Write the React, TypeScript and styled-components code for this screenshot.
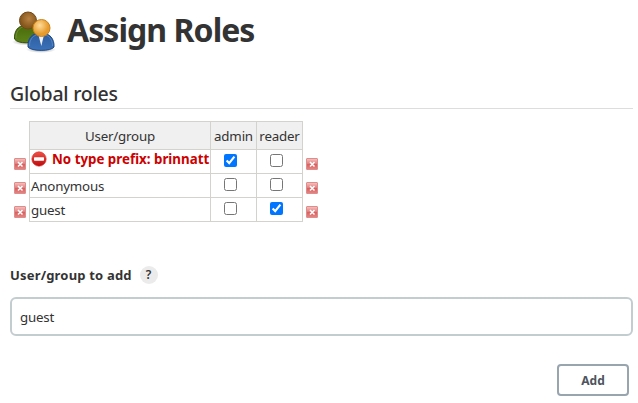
import React from "react";
import styled, { createGlobalStyle } from "styled-components";

const Global = createGlobalStyle`
  *, *::before, *::after { box-sizing: border-box; }
  body { margin: 0; background: #fff; overflow: hidden; }
`;

const Page = styled.main`
  width: 638px;
  height: 403px;
  padding: 0 5px 0 10px;
  display: flex;
  flex-direction: column;
  color: #333;
  background: #fff;
  font: 14px/20px "Noto Sans", "Open Sans", sans-serif;
  white-space: nowrap;
`;

const TitleBar = styled.header`
  display: flex;
  align-items: center;
  gap: 9px;
  height: 60px;
  svg { flex: none; }
`;

const Title = styled.h1`
  margin: 0;
  font-size: 32px;
  line-height: 40px;
  font-weight: 700;
  letter-spacing: -0.95px;
`;

const SectionTitle = styled.h2`
  margin: 20px 0 0;
  height: 29px;
  border-bottom: 1px solid #ddd;
  font-size: 19.5px;
  line-height: 28px;
  font-weight: 500;
  letter-spacing: -0.25px;
`;

const Matrix = styled.div`
  margin-top: 12px;
  display: flex;
  flex-direction: column;
`;

const Row = styled.div<{ $head?: boolean }>`
  display: grid;
  grid-template-columns: 19px 182px 46px 46px 20px;
  height: ${(p) => (p.$head ? 29 : 24)}px;
`;

const Cell = styled.div<{ $head?: boolean; $first?: boolean; $center?: boolean }>`
  display: flex;
  align-items: center;
  justify-content: ${(p) => (p.$center ? "center" : "flex-start")};
  padding: ${(p) => (p.$center ? "0" : "0 0 0 1px")};
  border: 0 solid #d3d3cb;
  border-right-width: 1px;
  border-bottom-width: 1px;
  border-left-width: ${(p) => (p.$first ? 1 : 0)}px;
  border-top-width: ${(p) => (p.$head ? 1 : 0)}px;
  background: ${(p) => (p.$head ? "#f0f0f0" : "#fff")};
  font-size: 13.33px;
  letter-spacing: -0.2px;
`;

const ErrorName = styled.span`
  display: flex;
  align-items: center;
  gap: 5px;
  margin-top: -5px;
  color: #c00;
  font-weight: 700;
  letter-spacing: 0;
`;

const Check = styled.input`
  width: 13px;
  height: 13px;
  margin: 0 6px 3px 0;
`;

const RemoveSlot = styled.div<{ $end?: boolean }>`
  padding: 8px 0 0 ${(p) => (p.$end ? 3 : 4)}px;
  line-height: 0;
`;

const Label = styled.div`
  display: flex;
  align-items: center;
  gap: 8px;
  height: 20px;
  margin-top: 43px;
  font-size: 13px;
  font-weight: 700;
  letter-spacing: 0.18px;
`;

const Help = styled.span`
  width: 18px;
  height: 18px;
  border-radius: 50%;
  background: #ebebeb;
  text-align: center;
  font-size: 12px;
  line-height: 18px;
  font-weight: 600;
`;

const Field = styled.input`
  width: 623px;
  height: 39px;
  margin: 12px 0 0;
  padding: 1px 8px 0;
  border: 2px solid #c3cccf;
  border-radius: 6px;
  outline: none;
  color: #333;
  font: 13.33px "Noto Sans", sans-serif;
  letter-spacing: -0.2px;
`;

const AddButton = styled.button`
  align-self: flex-end;
  width: 72px;
  height: 32px;
  margin: 28px 4px 0 0;
  padding: 0;
  border: 2px solid #98a4ae;
  border-radius: 4px;
  background: #fff;
  color: #4d545d;
  font: 700 12px "Noto Sans", sans-serif;
`;

const PeopleIcon = () => (
  <svg width="48" height="48" viewBox="0 0 48 48">
    <defs>
      <radialGradient id="brown" cx=".55" cy=".4"><stop offset="0" stopColor="#b98243" /><stop offset="1" stopColor="#85571c" /></radialGradient>
      <radialGradient id="gold" cx=".4" cy=".35"><stop offset="0" stopColor="#ffdc9b" /><stop offset="1" stopColor="#e69b2c" /></radialGradient>
      <linearGradient id="green" x2="0" y2="1"><stop offset="0" stopColor="#486b0b" /><stop offset="1" stopColor="#5f831a" /></linearGradient>
      <linearGradient id="blue" x2="0" y2="1"><stop offset="0" stopColor="#2c5b9c" /><stop offset="1" stopColor="#3b72ba" /></linearGradient>
      <radialGradient id="shade"><stop offset="0" stopOpacity=".4" /><stop offset="1" stopOpacity="0" /></radialGradient>
    </defs>
    <ellipse cx="17" cy="36" rx="15" ry="3.500" fill="url(#shade)" />
    <ellipse cx="31" cy="43.500" rx="15" ry="3.500" fill="url(#shade)" />
    <path d="M4.500 33C4 25 8 19.500 15 19.500c7 0 12 5 12 13.500-2 4.500-19 5.500-22.500 0z" fill="url(#green)" stroke="#35510b" />
    <path d="M6 32c0-6 3-10 7-11" fill="none" stroke="#7b963c" strokeWidth=".7" />
    <circle cx="18" cy="14.500" r="8.500" fill="url(#brown)" stroke="#744816" />
    <path d="M18 41c-.5-9 4-14 13-14s13.500 6 13 14c-2.500 4.500-23 4.500-26 0z" fill="url(#blue)" stroke="#204a87" />
    <path d="M19.500 40c0-6 3-10 7-11M42.500 40c0-6-3-10-7-11" fill="none" stroke="#6592cd" strokeWidth=".7" />
    <path d="m28.500 29 2.800 11 2.700-11z" fill="#eef2f7" />
    <circle cx="31.500" cy="22" r="8.500" fill="url(#gold)" stroke="#ce8119" />
  </svg>
);

const StopIcon = () => (
  <svg width="16" height="16" viewBox="0 0 16 16">
    <defs><linearGradient id="stop" x2="0" y2="1"><stop offset="0" stopColor="#f05047" /><stop offset="1" stopColor="#bd090b" /></linearGradient></defs>
    <circle cx="8" cy="8" r="7.200" fill="url(#stop)" stroke="#d52b26" strokeWidth=".6" />
    <rect x="3" y="6.200" width="10" height="3.500" rx=".6" fill="#fff" />
  </svg>
);

const RemoveIcon = () => (
  <svg width="12" height="12" viewBox="0 0 12 12">
    <defs><linearGradient id="remove" x2="0" y2="1"><stop offset="0" stopColor="#f6c5c3" /><stop offset=".5" stopColor="#e07c7b" /><stop offset=".55" stopColor="#d9605f" /><stop offset="1" stopColor="#e58886" /></linearGradient></defs>
    <rect x=".5" y=".5" width="11" height="11" rx=".5" fill="url(#remove)" stroke="#df8c8c" />
    <path d="m4 4 4.500 4.500m0-4.500L4 8.500" stroke="#fff" strokeWidth="1.500" />
  </svg>
);

const users = [
  { name: "No type prefix: brinnatt", invalid: true, admin: true, reader: false },
  { name: "Anonymous", invalid: false, admin: false, reader: false },
  { name: "guest", invalid: false, admin: false, reader: true },
];

export default function App() {
  return (
    <Page>
      <Global />
      <TitleBar><PeopleIcon /><Title>Assign Roles</Title></TitleBar>
      <SectionTitle>Global roles</SectionTitle>
      <Matrix>
        <Row $head>
          <span />
          <Cell $head $first $center>User/group</Cell>
          <Cell $head $center>admin</Cell>
          <Cell $head $center>reader</Cell>
        </Row>
        {users.map((u) => (
          <Row key={u.name}>
            <RemoveSlot><RemoveIcon /></RemoveSlot>
            <Cell $first>{u.invalid ? <ErrorName><StopIcon />{u.name}</ErrorName> : u.name}</Cell>
            <Cell $center><Check type="checkbox" defaultChecked={u.admin} /></Cell>
            <Cell $center><Check type="checkbox" defaultChecked={u.reader} /></Cell>
            <RemoveSlot $end><RemoveIcon /></RemoveSlot>
          </Row>
        ))}
      </Matrix>
      <Label>User/group to add <Help>?</Help></Label>
      <Field defaultValue="guest" />
      <AddButton>Add</AddButton>
    </Page>
  );
}
